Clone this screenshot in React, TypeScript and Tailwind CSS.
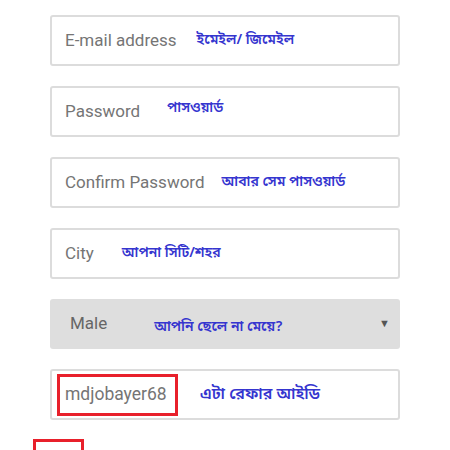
const sans = "font-['Roboto','Liberation_Sans',sans-serif]";
const bn = "font-['Noto_Sans_Bengali','Noto_Sans','Lato',sans-serif]";

type Row = { label: string; note: string; gap: string; shift: string };

const rows: Row[] = [
  { label: "E-mail address", note: "ইমেইল/ জিমেইল", gap: "ml-[20px]", shift: "" },
  { label: "Password", note: "পাসওয়ার্ড", gap: "ml-[27px]", shift: "-translate-y-[3px]" },
  { label: "Confirm Password", note: "আবার সেম পাসওয়ার্ড", gap: "ml-[17px]", shift: "" },
  { label: "City", note: "আপনা সিটি/শহর", gap: "ml-[28px]", shift: "" },
];

export default function App() {
  return (
    <div className={`min-h-[450px] bg-white ${sans}`}>
      <div className="mx-auto flex w-[350px] flex-col gap-[20px] pt-[15px]">
        {rows.map((r) => (
          <div
            key={r.label}
            className="flex h-[51px] items-center rounded-[3px] border-2 border-[#dcdcdc] px-[13px]"
          >
            <span className="text-[17px] text-[#757575]">{r.label}</span>
            <span className={`${r.gap} ${r.shift} ${bn} text-[14px] font-semibold text-[#3535cf]`}>
              {r.note}
            </span>
          </div>
        ))}

        {/* gender select */}
        <div className="flex h-[50px] items-center rounded-[3px] bg-[#dedede] pl-[20px] pr-[10px]">
          <span className="text-[17px] text-[#666]">Male</span>
          <span className={`ml-[47px] translate-y-[3px] ${bn} text-[14px] font-semibold text-[#3535cf]`}>
            আপনি ছেলে না মেয়ে?
          </span>
          <span className="ml-auto text-[11px] text-[#555]">▼</span>
        </div>

        {/* referral id */}
        <div className="flex h-[51px] items-center rounded-[3px] border-2 border-[#dcdcdc] pl-[5px]">
          <span className="flex h-[42px] w-[121px] items-center border-[3px] border-[#e8202b] pl-[5px] text-[17.5px] text-[#757575]">
            mdjobayer68
          </span>
          <span className={`ml-[22px] ${bn} text-[16px] font-semibold text-[#3535cf]`}>
            এটা রেফার আইডি
          </span>
        </div>
      </div>

      {/* red mark at the bottom */}
      <div className="ml-[33px] mt-[19px] h-[20px] w-[51px] border-[3px] border-[#e8202b]" />
    </div>
  );
}
